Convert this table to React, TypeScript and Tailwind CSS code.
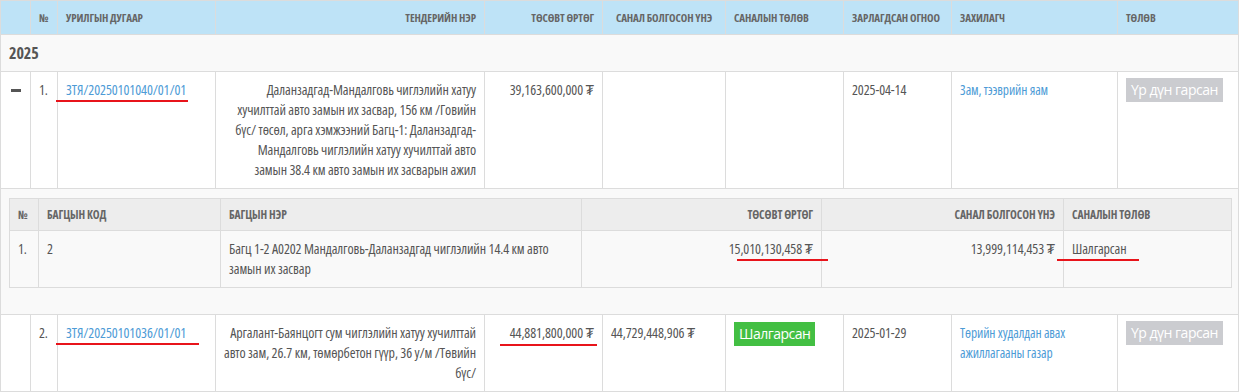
import React from "react";

const th = "border border-[#dcdcdc] px-2 py-2 text-[11px] font-bold uppercase text-[#666] align-middle leading-[17px] whitespace-nowrap";
const td = "border border-[#dcdcdc] px-2 py-2 align-top text-[14px] leading-5 text-[#555] bg-white";
const ith = "border border-[#dcdcdc] px-2 py-[7px] text-[11.5px] font-bold uppercase text-[#666] align-middle leading-[17px] whitespace-nowrap";
const itd = "border border-[#dcdcdc] px-2 py-2 align-top text-[14px] leading-5 text-[#555]";
const red = "absolute h-[2px] bg-[#e8141b]";
const link = "text-[#4d9bd6]";

function Gray() {
  return (
    <span className="inline-block bg-[#cbccd0] text-white text-[14px] leading-6 px-[5px] whitespace-nowrap font-stretch-normal tracking-[-0.5px]">
      Үр дүн гарсан
    </span>
  );
}

export default function App() {
  return (
    <div className="w-[1242px] h-[392px] overflow-hidden bg-white font-['Open_Sans',sans-serif] font-stretch-condensed tracking-[-0.1px]">
      <table className="table-fixed border-collapse w-[1238px]">
        <colgroup>
          <col className="w-[30px]" />
          <col className="w-[27px]" />
          <col className="w-[158px]" />
          <col className="w-[269px]" />
          <col className="w-[118px]" />
          <col className="w-[123px]" />
          <col className="w-[118px]" />
          <col className="w-[108px]" />
          <col className="w-[166px]" />
          <col className="w-[121px]" />
        </colgroup>
        <thead>
          <tr className="bg-[#bee3f7]">
            <th className={`${th} text-left`}></th>
            <th className={`${th} text-left`}>№</th>
            <th className={`${th} text-left`}>Урилгын дугаар</th>
            <th className={`${th} text-right`}>Тендерийн нэр</th>
            <th className={`${th} text-right`}>Төсөвт өртөг</th>
            <th className={`${th} text-center`}>Санал болгосон үнэ</th>
            <th className={`${th} text-left`}>Саналын төлөв</th>
            <th className={`${th} text-left`}>Зарлагдсан огноо</th>
            <th className={`${th} text-left`}>Захилагч</th>
            <th className={`${th} text-left`}>Төлөв</th>
          </tr>
        </thead>
        <tbody>
          <tr>
            <td colSpan={10} className="border border-[#dcdcdc] bg-[#f9f9f9] px-2 py-2 text-[16px] font-bold leading-5 text-[#555]">
              2025
            </td>
          </tr>
          <tr>
            <td className={td}>
              <div className="flex h-5 items-center">
                <span className="block w-[10px] h-[3px] bg-[#555] ml-[2px]" />
              </div>
            </td>
            <td className={td}>1.</td>
            <td className={td}>
              <span className={`relative ${link}`}>
                ЗТЯ/20250101040/01/01
                <span className={`${red} -left-[10px] -right-[2px] top-[calc(100%+1px)]`} />
              </span>
            </td>
            <td className={`${td} text-right whitespace-nowrap`}>
              Даланзадгад-Мандалговь чиглэлийн хатуу
              <br />
              хучилттай авто замын их засвар, 156 км /Говийн
              <br />
              бүс/ төсөл, арга хэмжээний Багц-1: Даланзадгад-
              <br />
              Мандалговь чиглэлийн хатуу хучилттай авто
              <br />
              замын 38.4 км авто замын их засварын ажил
            </td>
            <td className={`${td} text-right whitespace-nowrap`}>39,163,600,000 ₮</td>
            <td className={td}></td>
            <td className={td}></td>
            <td className={td}>2025-04-14</td>
            <td className={td}>
              <span className={`${link} text-[13.5px]`}>Зам, тээврийн яам</span>
            </td>
            <td className={`${td} pt-[6px]`}>
              <Gray />
            </td>
          </tr>
          <tr>
            <td colSpan={10} className="border border-[#dcdcdc] bg-[#f9f9f9] px-2 pt-[9px] pb-[26px]">
              <table className="table-fixed border-collapse w-full">
                <colgroup>
                  <col className="w-[29px]" />
                  <col className="w-[182px]" />
                  <col className="w-[361px]" />
                  <col className="w-[240px]" />
                  <col className="w-[242px]" />
                  <col className="w-[168px]" />
                </colgroup>
                <thead>
                  <tr className="bg-[#ededed]">
                    <th className={`${ith} text-left`}>№</th>
                    <th className={`${ith} text-left`}>Багцын код</th>
                    <th className={`${ith} text-left`}>Багцын нэр</th>
                    <th className={`${ith} text-right`}>Төсөвт өртөг</th>
                    <th className={`${ith} text-right`}>Санал болгосон үнэ</th>
                    <th className={`${ith} text-left`}>Саналын төлөв</th>
                  </tr>
                </thead>
                <tbody>
                  <tr className="bg-[#f9f9f9]">
                    <td className={itd}>1.</td>
                    <td className={itd}>2</td>
                    <td className={`${itd} whitespace-nowrap`}>
                      Багц 1-2 А0202 Мандалговь-Даланзадгад чиглэлийн 14.4 км авто
                      <br />
                      замын их засвар
                    </td>
                    <td className={`${itd} text-right whitespace-nowrap`}>
                      <span className="relative">
                        15,010,130,458 ₮
                        <span className={`${red} left-[8px] -right-[15px] top-[calc(100%+1px)]`} />
                      </span>
                    </td>
                    <td className={`${itd} text-right whitespace-nowrap`}>13,999,114,453 ₮</td>
                    <td className={itd}>
                      <span className="relative">
                        Шалгарсан
                        <span className={`${red} -left-[15px] -right-[12px] top-[calc(100%+1px)]`} />
                      </span>
                    </td>
                  </tr>
                </tbody>
              </table>
            </td>
          </tr>
          <tr>
            <td className={td}></td>
            <td className={td}>2.</td>
            <td className={td}>
              <span className={`relative ${link}`}>
                ЗТЯ/20250101036/01/01
                <span className={`${red} -left-[10px] -right-[13px] top-[calc(100%+1px)]`} />
              </span>
            </td>
            <td className={`${td} text-right whitespace-nowrap`}>
              Аргалант-Баянцогт сум чиглэлийн хатуу хучилттай
              <br />
              авто зам, 26.7 км, төмөрбетон гүүр, 36 у/м /Төвийн
              <br />
              бүс/
            </td>
            <td className={`${td} text-right whitespace-nowrap`}>
              <span className="relative">
                44,881,800,000 ₮
                <span className={`${red} -left-[10px] -right-[3px] top-[calc(100%+2px)]`} />
              </span>
            </td>
            <td className={`${td} whitespace-nowrap`}>44,729,448,906 ₮</td>
            <td className={`${td} pt-[7px]`}>
              <span className="inline-block bg-[#43bf43] text-white text-[14px] leading-6 px-[5px] font-stretch-normal tracking-[-0.5px]">
                Шалгарсан
              </span>
            </td>
            <td className={td}>2025-01-29</td>
            <td className={td}>
              <span className={`${link} text-[13.5px]`}>
                Төрийн худалдан авах
                <br />
                ажиллагааны газар
              </span>
            </td>
            <td className={`${td} pt-[6px]`}>
              <Gray />
            </td>
          </tr>
        </tbody>
      </table>
    </div>
  );
}
